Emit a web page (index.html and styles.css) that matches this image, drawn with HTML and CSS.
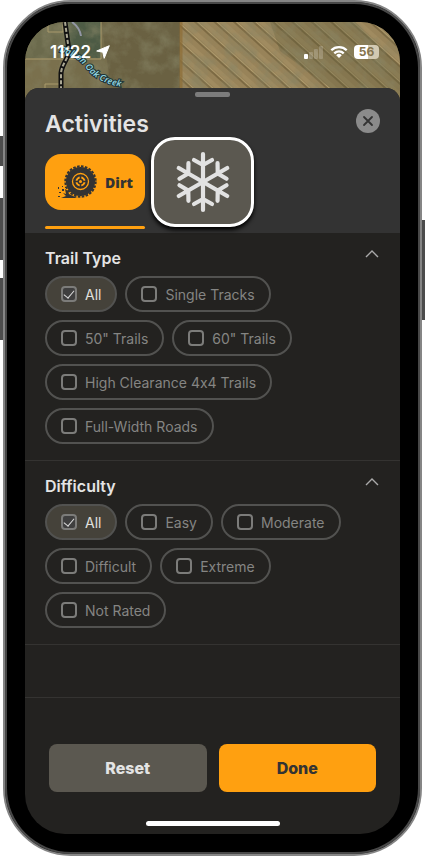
FILE: index.html
```html
<!DOCTYPE html>
<html lang="en">
<head>
  <meta charset="UTF-8" />
  <meta name="viewport" content="width=device-width, initial-scale=1.0"/>
  <title>Activities</title>
  <link rel="stylesheet" href="styles.css">
</head>
<body>

  <div class="phone">
    <span class="side-button mute"></span>
    <span class="side-button volume-up"></span>
    <span class="side-button volume-down"></span>
    <span class="side-button power"></span>

    <div class="screen">
      <!-- Satellite map -->
      <svg class="map" viewBox="0 0 375 84" preserveAspectRatio="xMidYMin slice" aria-hidden="true">
        <defs>
          <pattern id="furrows" width="13" height="40" patternUnits="userSpaceOnUse" patternTransform="rotate(-48)">
            <rect width="13" height="40" fill="#988359"/>
            <rect width="4" height="40" fill="#a08b60"/>
            <rect x="9" width="2" height="40" fill="#7d6a43"/>
            <rect x="11" width="1" height="40" fill="#b09c6e"/>
          </pattern>
          <filter id="rough" x="0" y="0" width="100%" height="100%">
            <feTurbulence type="fractalNoise" baseFrequency="0.06" numOctaves="5" seed="6"/>
            <feColorMatrix values="0 0 0 0 0.24  0 0 0 0 0.23  0 0 0 0 0.13  2.4 0 0 0 -0.95"/>
          </filter>
          <path id="creek" d="M34 30 C46 33 54 37 60 45 C68 55 78 63 104 66"/>
        </defs>
        <rect width="375" height="84" fill="#756c4a"/>
        <rect width="76" height="36" fill="#6b6a4c"/>
        <path d="M41 0h35v36H43z" fill="#4d5b45"/>
        <path d="M0 37h37v47H0z" fill="#7a704d"/>
        <path d="M76 0h79v84H60L84 52z" fill="#6a6142"/>
        <rect x="155" width="220" height="84" fill="url(#furrows)"/>
        <path d="M245 0h85l45 45v39h-45l-75-55z" fill="#5b5837" opacity=".3"/>
        <rect width="375" height="84" filter="url(#rough)" opacity=".6"/>
        <path d="M23 0v10h15V0M0 37h76V0M20 84V62h18" fill="none" stroke="#a99a6c"/>
        <path d="M156 0v84" stroke="#8d6d35" stroke-width="3" opacity=".7"/>
        <path d="M40 0l4 29c0 7-7 12-8 22v33" fill="none" stroke="#111" stroke-width="5"/>
        <path d="M40 0l4 29c0 7-7 12-8 22v33" fill="none" stroke="#aaa793" stroke-width="2" stroke-dasharray="4 2"/>
        <path d="M47 0q8 6 9 14" fill="none" stroke="#9296a4" stroke-width="2"/>
        <text class="creek"><textPath href="#creek">Dalton Oak Creek</textPath></text>
      </svg>

      <div class="status-bar">
        <div class="time">
          <span>11:22</span>
          <svg width="14" height="14" viewBox="0 0 14 14"><path d="M13.3.7 8.2 13.3 6.8 7.2.7 6z" fill="#fff" stroke="#fff" stroke-linejoin="round"/></svg>
        </div>
        <div class="indicators">
          <svg width="20" height="14" viewBox="0 0 20 14" fill="#fff">
            <rect x="0" y="9" width="4" height="5" rx="1"/>
            <g opacity=".2">
              <rect x="5" y="7" width="4" height="7" rx="1"/>
              <rect x="10" y="4" width="4" height="10" rx="1"/>
              <rect x="15" y="1" width="4" height="13" rx="1"/>
            </g>
          </svg>
          <svg width="18" height="14" viewBox="0 0 18 14" fill="none" stroke="#fff" stroke-width="2.3">
            <path d="M1.3 5.2a11 11 0 0 1 15.4 0M4.3 8.3a6.8 6.8 0 0 1 9.4 0"/>
            <path d="M6.2 10.2a4 4 0 0 1 5.6 0L9 13z" fill="#fff" stroke="none"/>
          </svg>
          <span class="battery">56</span>
        </div>
      </div>

      <main class="sheet">
        <header class="sheet-header">
          <div class="handle"></div>
          <div class="title-row">
            <h1>Activities</h1>
            <button class="close" aria-label="Close">
              <svg width="12" height="12" viewBox="0 0 12 12"><path d="M2 2l8 8M10 2l-8 8" stroke="#333" stroke-width="1.8" stroke-linecap="round"/></svg>
            </button>
          </div>
          <div class="tabs">
            <button class="tab dirt">
              <svg width="40" height="34" viewBox="0 0 40 34">
                <circle cx="23.5" cy="16.5" r="14.600" fill="#333"/>
                <circle cx="23.5" cy="16.5" r="15.200" fill="none" stroke="#333" stroke-width="2" stroke-dasharray="2.6 1.380"/>
                <circle cx="23.5" cy="16.5" r="8" fill="none" stroke="#ffa010" stroke-width="1.300"/>
                <circle cx="23.5" cy="16.5" r="4" fill="none" stroke="#ffa010" stroke-width="2"/>
                <path d="M23.5 10.500v12M17.500 16.5h12" stroke="#333" stroke-width="1.600"/>
                <circle cx="23.5" cy="16.5" r="1.500" fill="#ffa010"/>
                <path d="M4 33l5-2-3-3 3 1-1-5 3 2 1 3 4 2 4 2z" fill="#333"/>
                <path d="M1 22h1v2H1zM5 24h2v2H5zM2 27h2v1H2zM1 31h2v1H1zM5 21h1v1H5zM8 22h1v1H8z" fill="#333"/>
              </svg>
              <span>Dirt</span>
            </button>
            <button class="tab snow" aria-label="Snow">
              <svg width="62" height="62" viewBox="-31 -31 62 62" fill="none" stroke="#e2e2e2" stroke-width="4.200" stroke-linecap="round" stroke-linejoin="round">
                <defs><path id="arm" d="M0 0v-28M-9-22l9 5 9-5"/></defs>
                <use href="#arm"/>
                <use href="#arm" transform="rotate(60)"/>
                <use href="#arm" transform="rotate(120)"/>
                <use href="#arm" transform="rotate(180)"/>
                <use href="#arm" transform="rotate(240)"/>
                <use href="#arm" transform="rotate(300)"/>
              </svg>
            </button>
          </div>
        </header>

        <section class="filter">
          <div class="filter-title">
            <h2>Trail Type</h2>
            <button class="toggle" aria-label="Collapse Trail Type">
              <svg width="14" height="8" viewBox="0 0 14 8"><path d="M1 7l6-6 6 6" fill="none" stroke="#aaa" stroke-width="1.400"/></svg>
            </button>
          </div>
          <div class="chips">
            <label class="chip"><input type="checkbox" checked>All</label>
            <label class="chip"><input type="checkbox">Single Tracks</label>
            <label class="chip"><input type="checkbox">50" Trails</label>
            <label class="chip"><input type="checkbox">60" Trails</label>
            <label class="chip"><input type="checkbox">High Clearance 4x4 Trails</label>
            <label class="chip"><input type="checkbox">Full-Width Roads</label>
          </div>
        </section>

        <section class="filter">
          <div class="filter-title">
            <h2>Difficulty</h2>
            <button class="toggle" aria-label="Collapse Difficulty">
              <svg width="14" height="8" viewBox="0 0 14 8"><path d="M1 7l6-6 6 6" fill="none" stroke="#aaa" stroke-width="1.400"/></svg>
            </button>
          </div>
          <div class="chips">
            <label class="chip"><input type="checkbox" checked>All</label>
            <label class="chip"><input type="checkbox">Easy</label>
            <label class="chip"><input type="checkbox">Moderate</label>
            <label class="chip"><input type="checkbox">Difficult</label>
            <label class="chip"><input type="checkbox">Extreme</label>
            <label class="chip"><input type="checkbox">Not Rated</label>
          </div>
        </section>

        <div class="spacer"></div>

        <footer>
          <div class="actions">
            <button class="reset">Reset</button>
            <button class="done">Done</button>
          </div>
          <div class="home-bar"></div>
        </footer>
      </main>
    </div>
  </div>

</body>
</html>
```
FILE: styles.css
```css
* {
  box-sizing: border-box;
}
body {
  margin: 0;
  padding: 0 3px;
  background: #fff;
  color: #e4e4e4;
  font-family: Inter, "Liberation Sans", sans-serif;
}
h1, h2 {
  margin: 0;
  font-weight: 600;
}
button {
  padding: 0;
  border: none;
  font-family: inherit;
  cursor: pointer;
}
svg {
  display: block;
}

/* Phone */
.phone {
  position: relative;
  display: flex;
  min-height: 100vh;
  padding: 20px;
  background: #000;
  border: 2px solid #858585;
  border-radius: 68px;
  box-shadow: inset 0 0 0 2px #484848;
}
.side-button {
  position: absolute;
  left: -5px;
  width: 3px;
  background: #4c4c4c;
}
.mute {
  top: 134px;
  height: 30px;
}
.volume-up {
  top: 196px;
  height: 62px;
}
.volume-down {
  top: 276px;
  height: 62px;
}
.power {
  top: 218px;
  left: auto;
  right: -5px;
  height: 100px;
}
.screen {
  position: relative;
  display: flex;
  flex-direction: column;
  flex: 1;
  overflow: hidden;
  border-radius: 40px;
}
.map {
  position: absolute;
  top: 0;
  left: 0;
  width: 100%;
  height: 84px;
}
.creek {
  fill: #8fd0dc;
  stroke: #1d3338;
  stroke-width: 2px;
  paint-order: stroke;
  font: italic 600 9px "Noto Sans", sans-serif;
}

/* Status bar */
.status-bar {
  position: relative;
  display: flex;
  justify-content: space-between;
  height: 66px;
  padding: 20px 21px 0 25px;
  color: #fff;
}
.time, .indicators {
  display: flex;
  align-items: center;
  height: 20px;
}
.time {
  gap: 5px;
  font-size: 17px;
  font-weight: 600;
}
.indicators {
  gap: 6px;
}
.battery {
  width: 25px;
  border-radius: 4px;
  background: linear-gradient(90deg, #fff 56%, #d3cab2 56%);
  color: #85744d;
  font-size: 12px;
  font-weight: 700;
  line-height: 14px;
  text-align: center;
}

/* Sheet */
.sheet {
  position: relative;
  display: flex;
  flex-direction: column;
  flex: 1;
  overflow: hidden;
  border-radius: 14px 14px 0 0;
  background: #232220;
}
.sheet-header {
  padding: 4px 20px;
  background: #333;
}
.handle {
  width: 35px;
  height: 5px;
  margin: 0 auto;
  border-radius: 2px;
  background: #7c7c7c;
}
.title-row {
  display: flex;
  justify-content: space-between;
  padding-top: 12px;
}
h1 {
  padding-top: 1px;
  font-size: 23px;
  line-height: 28px;
}
.close {
  display: grid;
  place-items: center;
  width: 24px;
  height: 24px;
  border-radius: 50%;
  background: #8b8b8b;
}
.tabs {
  display: flex;
  gap: 6px;
  margin-top: 16px;
}
.tab {
  display: flex;
  align-items: center;
  justify-content: center;
}
.dirt {
  position: relative;
  gap: 8px;
  width: 100px;
  height: 56px;
  margin-bottom: 19px;
  border-radius: 16px;
  background: #ffa010;
  color: #333;
  font: 800 14px "Open Sans", sans-serif;
}
.dirt::after {
  content: "";
  position: absolute;
  bottom: -19px;
  left: 0;
  width: 100%;
  height: 3px;
  border-radius: 2px;
  background: #ffa010;
}
.snow {
  width: 103px;
  height: 90px;
  margin: -17px 0;
  border: 3px solid #fff;
  border-radius: 24px;
  background: #5b5850;
  box-shadow: 0 3px 4px #000;
}

/* Filters */
.filter {
  padding: 15px 20px 16px;
  border-bottom: 1px solid #343331;
}
.filter-title {
  display: flex;
  justify-content: space-between;
  align-items: flex-start;
  margin-bottom: 8px;
}
h2 {
  font-size: 16px;
  line-height: 20px;
}
.toggle {
  padding: 2px 1px;
  background: none;
}
.chips {
  display: flex;
  flex-wrap: wrap;
  gap: 8px;
}
.chip {
  display: flex;
  align-items: center;
  gap: 8px;
  height: 36px;
  padding: 0 14px;
  border: 2px solid #525250;
  border-radius: 18px;
  color: #858583;
  font-size: 14px;
  font-feature-settings: "calt" 0;
}
.chip:has(:checked) {
  background: #45423a;
  color: #e0e0de;
}
.chip input {
  display: grid;
  place-items: center;
  width: 16px;
  height: 16px;
  margin: 0;
  border: 2px solid #7c7c7a;
  border-radius: 4px;
  appearance: none;
}
.chip input:checked {
  background: #3f3f3f;
}
.chip input:checked::after {
  content: "";
  width: 5px;
  height: 9px;
  margin-bottom: 2px;
  border: solid #ddd;
  border-width: 0 1px 1px 0;
  transform: rotate(40deg);
}
.spacer {
  height: 53px;
  border-bottom: 1px solid #343331;
}

/* Bottom buttons */
footer {
  margin-top: auto;
  padding: 0 24px 8px;
}
.actions {
  display: flex;
  gap: 12px;
}
.actions button {
  flex: 1;
  height: 48px;
  border-radius: 8px;
  font-size: 16px;
  font-weight: 800;
}
.reset {
  background: #5b5850;
  color: #e4e4e4;
}
.done {
  background: #ffa010;
  color: #333;
}
.home-bar {
  width: 134px;
  height: 5px;
  margin: 29px auto 0;
  border-radius: 3px;
  background: #fff;
}
```
